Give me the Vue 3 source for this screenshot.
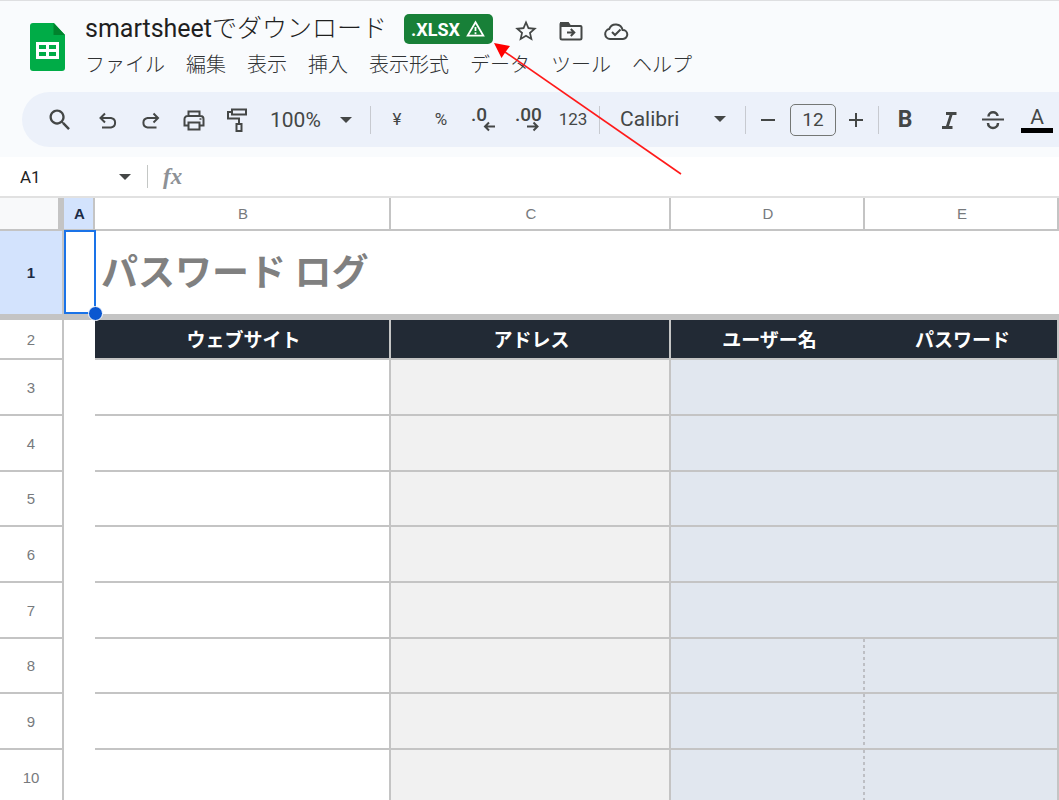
<script setup>
import { ref } from 'vue'

const menus = ['ファイル', '編集', '表示', '挿入', '表示形式', 'データ', 'ツール', 'ヘルプ']
const columns = ['A', 'B', 'C', 'D', 'E']
const headings = ['ウェブサイト', 'アドレス', 'ユーザー名', 'パスワード']
const bodyRows = [3, 4, 5, 6, 7, 8, 9, 10]

const cellName = ref('A1')
const fontSize = ref('12')
const zoom = ref('100%')
const font = ref('Calibri')
</script>

<template>
  <div class="app">
    <header class="top">
      <a class="logo" href="#" aria-label="スプレッドシート ホーム">
        <svg width="36" height="48" viewBox="0 0 36 48">
          <path d="M3 0h21l11 12v33a3 3 0 0 1-3 3H3a3 3 0 0 1-3-3V3a3 3 0 0 1 3-3z" fill="#00ac47" />
          <path d="M23.500 0L35 12H23.500z" fill="#00832d" />
          <path d="M6 19h23v17H6zM9 22v4h7v-4zM19 22v4h7v-4zM9 29v4h7v-4zM19 29v4h7v-4z" fill="#fff" fill-rule="evenodd" />
        </svg>
      </a>
      <div class="heading">
        <div class="title-row">
          <h1>smartsheet<span>でダウンロード</span></h1>
          <button class="badge" type="button">
            <span>.XLSX</span>
            <svg width="19" height="18" viewBox="0 0 19 18" fill="none" stroke="#fff" stroke-width="1.800">
              <path d="M9.500 2.200L17.300 15.600H1.700z" />
              <path d="M9.500 7v4M9.500 12.200v2" />
            </svg>
          </button>
          <div class="doc-icons">
            <button type="button" aria-label="スター">
              <svg width="26" height="26" viewBox="0 0 24 24" fill="#444746"><path d="M22 9.240l-7.190-.62L12 2 9.190 8.630 2 9.240l5.460 4.730L5.820 21 12 17.270 18.180 21l-1.630-7.030L22 9.240zM12 15.400l-3.760 2.270 1-4.280-3.320-2.880 4.380-.38L12 6.100l1.710 4.040 4.380.38-3.320 2.880 1 4.280L12 15.400z" /></svg>
            </button>
            <button type="button" aria-label="移動">
              <svg width="26" height="26" viewBox="0 0 26 26" fill="none" stroke="#444746" stroke-width="2">
                <path d="M3 5.500h7l2 2.500h10.500a1 1 0 0 1 1 1v11a1.500 1.500 0 0 1-1.500 1.500H4A1.500 1.500 0 0 1 2.500 20V6z" />
                <path d="M3 5h7l2 3H3z" fill="#444746" />
                <path d="M9 14.500h7M12.800 11l3.500 3.500-3.500 3.500" />
              </svg>
            </button>
            <button type="button" aria-label="ドキュメントのステータス">
              <svg width="26" height="26" viewBox="0 0 26 26" fill="none" stroke="#444746" stroke-width="2">
                <path d="M7 21a5 5 0 0 1-.8-9.900A7 7 0 0 1 19.600 12a4.500 4.500 0 0 1 .4 9z" />
                <path d="M9 14l3 3 5.500-5.500" />
              </svg>
            </button>
          </div>
        </div>
        <nav class="menus">
          <button v-for="m in menus" :key="m" type="button">{{ m }}</button>
        </nav>
      </div>
    </header>

    <div class="toolbar" role="toolbar">
      <button class="tool search" type="button" aria-label="検索">
        <svg width="28" height="28" viewBox="0 0 24 24" fill="#444746"><path d="M15.500 14h-.79l-.28-.27C15.410 12.590 16 11.110 16 9.500 16 5.910 13.090 3 9.500 3S3 5.910 3 9.500 5.910 16 9.500 16c1.610 0 3.090-.59 4.230-1.570l.27.28v.79l5 4.990L20.490 19l-4.990-5zm-6 0C7.010 14 5 11.990 5 9.500S7.010 5 9.500 5 14 7.010 14 9.500 11.990 14 9.500 14z" /></svg>
      </button>
      <button class="tool" type="button" aria-label="元に戻す">
        <svg class="line" viewBox="0 0 28 28"><path d="M11 7.500L6.500 12l4.500 4.500M6.500 12H17a4.800 4.800 0 0 1 0 9.500H8" /></svg>
      </button>
      <button class="tool" type="button" aria-label="やり直し">
        <svg class="line" viewBox="0 0 28 28"><path d="M16.500 7.500L21 12l-4.500 4.500M21 12H10.500a4.800 4.800 0 0 0 0 9.500H19.500" /></svg>
      </button>
      <button class="tool" type="button" aria-label="印刷">
        <svg class="line" viewBox="0 0 28 28"><path d="M8.500 10V5.500h11V10M8.500 19.500H4.500V13a3 3 0 0 1 3-3h13a3 3 0 0 1 3 3v6.500h-4M8.500 16.500h11v7h-11z" /><path d="M19.500 13h2" stroke-width="1.500" /></svg>
      </button>
      <button class="tool" type="button" aria-label="書式を貼り付け">
        <svg class="line" viewBox="0 0 28 28"><path d="M9 3.500h14v5H9zM9 6H5v6.500h11V18M13.500 18h5v7h-5z" /></svg>
      </button>
      <label class="pick zoom">
        <select v-model="zoom" aria-label="ズーム"><option>100%</option></select>
        <svg width="12" height="6" viewBox="0 0 12 6"><path d="M0 0h12L6 6z" fill="#444746" /></svg>
      </label>
      <span class="sep"></span>
      <button class="tool wide small" type="button">¥</button>
      <button class="tool wide small" type="button">%</button>
      <button class="tool wide" type="button" aria-label="小数点以下の桁数を減らす">
        <svg class="dec" viewBox="0 0 28 28"><text x="0" y="15">.0</text><path d="M24 20.500H14M18 16.500l-4 4 4 4" /></svg>
      </button>
      <button class="tool wide" type="button" aria-label="小数点以下の桁数を増やす">
        <svg class="dec" viewBox="0 0 28 28"><text x="0" y="15">.00</text><path d="M12 20.500h10M18.500 16.500l4 4-4 4" /></svg>
      </button>
      <button class="tool wide small" type="button">123</button>
      <span class="sep"></span>
      <label class="pick font">
        <select v-model="font" aria-label="フォント"><option>Calibri</option></select>
        <svg width="12" height="6" viewBox="0 0 12 6"><path d="M0 0h12L6 6z" fill="#444746" /></svg>
      </label>
      <span class="sep"></span>
      <button class="tool step" type="button" aria-label="フォントサイズを縮小">
        <svg width="16" height="16" viewBox="0 0 16 16" stroke="#444746" stroke-width="2"><path d="M1 8h14" /></svg>
      </button>
      <input v-model="fontSize" class="size" aria-label="フォントサイズ" />
      <button class="tool step" type="button" aria-label="フォントサイズを拡大">
        <svg width="16" height="16" viewBox="0 0 16 16" stroke="#444746" stroke-width="2"><path d="M1 8h14M8 1v14" /></svg>
      </button>
      <span class="sep"></span>
      <button class="tool wide bold" type="button">B</button>
      <button class="tool wide" type="button" aria-label="斜体">
        <svg class="line" viewBox="0 0 28 28"><path d="M11 7.500h10.500M7 21.500h10.500M16.500 7.500L12 21.500" stroke-width="2.800" /></svg>
      </button>
      <button class="tool wide" type="button" aria-label="取り消し線">
        <svg class="line" viewBox="0 0 28 28"><path d="M3 13.500h22" /><path d="M9.500 10.500C9.500 5 18.500 5 18.500 10M9 17c0 6.500 10 6.500 10 0" stroke-width="2.500" /></svg>
      </button>
      <button class="tool wide color" type="button"><span>A</span></button>
    </div>

    <div class="formula">
      <input v-model="cellName" class="name" aria-label="名前ボックス" />
      <svg width="12" height="6" viewBox="0 0 12 6"><path d="M0 0h12L6 6z" fill="#444746" /></svg>
      <span class="bar"></span>
      <span class="fx">fx</span>
      <input class="entry" aria-label="数式" />
    </div>

    <table class="sheet">
      <colgroup>
        <col class="c-num" /><col class="c-a" /><col class="c-b" /><col class="c-c" /><col class="c-d" /><col />
      </colgroup>
      <thead>
        <tr>
          <td class="corner"></td>
          <th v-for="c in columns" :key="c" scope="col" :class="{ active: c === 'A' }">{{ c }}</th>
        </tr>
      </thead>
      <tbody>
        <tr class="frozen">
          <th class="active" scope="row">1</th>
          <td class="selected"><span class="outline"></span></td>
          <td class="sheet-title" colspan="4">パスワード ログ</td>
        </tr>
        <tr class="labels">
          <th scope="row">2</th>
          <td class="blank"></td>
          <td v-for="h in headings" :key="h" class="label">{{ h }}</td>
        </tr>
        <tr v-for="r in bodyRows" :key="r" class="entry-row">
          <th scope="row">{{ r }}</th>
          <td class="blank"></td>
          <td></td>
          <td class="gray"></td>
          <td class="blue" :class="{ dashed: r >= 8 }"></td>
          <td class="blue last"></td>
        </tr>
      </tbody>
    </table>

    <svg class="pointer" width="190" height="134" viewBox="0 0 190 134">
      <path d="M188 132L12 10" stroke="#ff1a1a" stroke-width="1.600" />
      <path d="M1 1l16 3-4.500 6-4 6z" fill="#f00" />
    </svg>
  </div>
</template>

<style>
html,
body {
  background: #fff;
}
</style>

<style scoped>
* {
  box-sizing: border-box;
}
.app {
  position: relative;
  height: 100vh;
  overflow: hidden;
  background: #f9fbfd;
  font-family: Roboto, "Noto Sans CJK JP", sans-serif;
  color: #1f1f1f;
}
button,
input,
select {
  margin: 0;
  padding: 0;
  border: 0;
  background: none;
  font-family: inherit;
  color: inherit;
  outline: 0;
}
svg {
  display: block;
  flex: none;
}
.top {
  display: flex;
  height: 92px;
  border-top: 1px solid #dedfe1;
}
.logo {
  flex: none;
  width: 85px;
  padding: 22px 0 0 30px;
}
.title-row {
  display: flex;
  align-items: center;
  height: 44px;
  padding-top: 12px;
}
h1 {
  margin: 0;
  width: 304px;
  font-size: 25px;
  line-height: 30px;
  font-weight: 400;
  white-space: nowrap;
}
h1 span {
  font-weight: 300;
}
.badge {
  display: flex;
  align-items: center;
  gap: 6px;
  height: 30px;
  margin-left: 15px;
  padding: 0 8px 0 7px;
  border-radius: 5px;
  background: #188038;
  color: #fff;
  font-size: 18px;
  font-weight: 700;
}
.doc-icons {
  display: flex;
  gap: 19px;
  margin-left: 20px;
  padding-top: 4px;
}
.menus {
  display: flex;
  gap: 21px;
  height: 40px;
  align-items: center;
}
.menus button {
  font-size: 20px;
  line-height: 28px;
  font-weight: 300;
  white-space: nowrap;
  color: #303234;
}
.toolbar {
  display: flex;
  align-items: center;
  height: 55px;
  margin-left: 22px;
  padding-left: 16px;
  border-radius: 28px 0 0 28px;
  background: #ecf1fa;
  color: #444746;
  overflow: hidden;
}
.tool {
  display: flex;
  flex: none;
  align-items: center;
  justify-content: center;
  width: 43px;
  height: 40px;
}
.search {
  margin-right: 5px;
}
.wide {
  width: 44px;
}
.step {
  width: 36px;
}
.small {
  font-size: 17px;
  padding-bottom: 2px;
}
.bold {
  font-size: 23px;
  font-weight: 700;
}
.line {
  width: 28px;
  height: 28px;
  fill: none;
  stroke: #444746;
  stroke-width: 2;
}
.dec {
  width: 28px;
  height: 28px;
  overflow: visible;
}
.dec text {
  font-size: 19px;
  font-weight: 500;
  fill: #444746;
}
.dec path {
  fill: none;
  stroke: #444746;
  stroke-width: 2;
}
.pick {
  display: flex;
  flex: none;
  align-items: center;
  justify-content: space-between;
}
.pick select {
  appearance: none;
  font-size: 21px;
  line-height: 28px;
}
.zoom {
  width: 108px;
  padding: 0 14px 0 12px;
}
.font {
  width: 137px;
  padding: 0 15px 2px 16px;
}
.sep {
  flex: none;
  width: 1px;
  height: 28px;
  margin: 0 4px;
  background: #c7cad0;
}
.size {
  flex: none;
  width: 46px;
  height: 32px;
  margin: 0 2px 0 4px;
  border: 1px solid #747775;
  border-radius: 5px;
  font-size: 19px;
  text-align: center;
}
.color span {
  padding: 0 9px;
  border-bottom: 5px solid #000;
  font-size: 21px;
  line-height: 22px;
}
.formula {
  display: flex;
  align-items: center;
  height: 41px;
  margin-top: 10px;
  border-bottom: 2px solid #e1e1e1;
  background: #fff;
}
.name {
  width: 119px;
  padding-left: 20px;
  font-size: 17px;
}
.bar {
  width: 1px;
  height: 23px;
  margin: 0 15px 0 16px;
  background: #c4c7c5;
}
.fx {
  width: 22px;
  font-family: "Liberation Serif", serif;
  font-size: 23px;
  font-style: italic;
  font-weight: 700;
  line-height: 24px;
  color: #8d9196;
}
.entry {
  flex: 1;
}
.sheet {
  width: 100%;
  table-layout: fixed;
  border-collapse: separate;
  border-spacing: 0;
  background: #fff;
}
.c-num {
  width: 64px;
}
.c-a {
  width: 31px;
}
.c-b {
  width: 296px;
}
.c-c {
  width: 280px;
}
.c-d {
  width: 194px;
}
.sheet th,
.sheet td {
  padding: 0;
  border: 0 solid #c4c4c4;
  border-width: 0 2px 2px 0;
}
.sheet th {
  font-family: "Liberation Sans", Arial, sans-serif;
  font-size: 15px;
  font-weight: 400;
  color: #777a7d;
}
.sheet thead th,
.sheet thead td {
  height: 33px;
  padding-left: 2px;
}
.sheet .corner {
  border-right-width: 6px;
  background: #f8f9fa;
}
.sheet th.active {
  background: #d3e3fd;
  color: #1b2b45;
  font-weight: 700;
}
.sheet .frozen th,
.sheet .frozen td {
  height: 89px;
  border-bottom-width: 6px;
}
.sheet .selected {
  position: relative;
  border-right: 0;
}
.outline {
  position: absolute;
  inset: -1px -1px 0 0;
  border: 2px solid #1a73e8;
}
.outline::after {
  content: "";
  position: absolute;
  right: -9px;
  bottom: -9px;
  width: 13px;
  height: 13px;
  border: 1px solid #fff;
  border-radius: 50%;
  background: #0b57d0;
}
.sheet .sheet-title {
  padding: 0 0 6px 6px;
  border-right: 0;
  font-size: 37px;
  line-height: 48px;
  font-weight: 700;
  font-family: "Noto Sans CJK JP", sans-serif;
  color: #808080;
}
.labels th,
.labels td {
  height: 40px;
}
.sheet .blank {
  border: 0;
}
.sheet .label {
  padding-left: 3px;
  background: #222a35;
  color: #fff;
  font-family: "Noto Sans CJK JP", sans-serif;
  font-size: 19px;
  line-height: 28px;
  font-weight: 700;
  text-align: center;
}
.sheet .label:nth-child(5) {
  border-right: 0;
}
.entry-row th,
.entry-row td {
  height: 56px;
}
.entry-row:nth-child(3n + 2) th,
.entry-row:nth-child(3n + 2) td {
  height: 55px;
}
.gray {
  background: #f1f1f1;
}
.blue {
  background: #e1e7ef;
}
.sheet .blue:not(.last) {
  border-right: 0;
}
.blue.dashed {
  background: repeating-linear-gradient(#bdbfc4 0 3px, transparent 3px 6px) right / 2px 100% no-repeat #e1e7ef;
}
.pointer {
  position: absolute;
  left: 493px;
  top: 42px;
  fill: none;
  pointer-events: none;
}
</style>
